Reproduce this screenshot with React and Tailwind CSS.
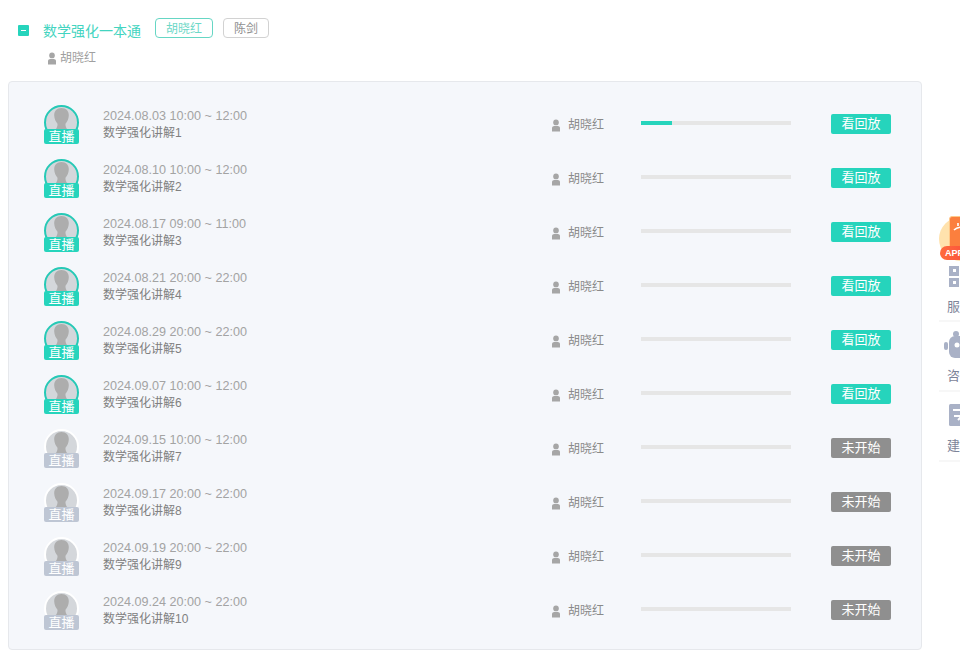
const FONT = "font-['Liberation_Sans','Noto_Sans_CJK_SC',sans-serif]";

const rows = [
  ["2024.08.03 10:00 ~ 12:00", "数学强化讲解1", 1],
  ["2024.08.10 10:00 ~ 12:00", "数学强化讲解2", 1],
  ["2024.08.17 09:00 ~ 11:00", "数学强化讲解3", 1],
  ["2024.08.21 20:00 ~ 22:00", "数学强化讲解4", 1],
  ["2024.08.29 20:00 ~ 22:00", "数学强化讲解5", 1],
  ["2024.09.07 10:00 ~ 12:00", "数学强化讲解6", 1],
  ["2024.09.15 10:00 ~ 12:00", "数学强化讲解7", 0],
  ["2024.09.17 20:00 ~ 22:00", "数学强化讲解8", 0],
  ["2024.09.19 20:00 ~ 22:00", "数学强化讲解9", 0],
  ["2024.09.24 20:00 ~ 22:00", "数学强化讲解10", 0],
];

function UserIcon({ className }) {
  return (
    <svg viewBox="0 0 8 12" className={className} fill="#a6a6a6">
      <ellipse cx="4" cy="2.9" rx="2.8" ry="2.9" />
      <path d="M0 12V8.6C0 7.3 1.100 6.400 2.300 6.400h3.400C6.900 6.400 8 7.300 8 8.600V12z" />
    </svg>
  );
}

function Avatar({ active }) {
  return (
    <div className="relative w-[35px] h-[39px] shrink-0">
      <div className={`w-[35px] h-[35px] rounded-full overflow-hidden ${active ? "border-2 border-[#26c9b6]" : "border-2 border-white"} bg-[#d4d7db]`}>
        <svg viewBox="0 0 35 35" className="block -mt-[2px] -ml-[2px] w-[35px] h-[35px] max-w-none">
          <path d="M6 35c0-6 3-9 8-10h7c5 1 8 4 8 10z" fill="#f4f4f4" />
          <path d="M17.500 3c4.600 0 7.500 3 7.300 7.500-.2 3.500-1.500 6.300-3.300 8.200-.2 2 .5 4 2 6l-6 8-6-8c1.500-2 2.200-4 2-6-1.800-1.900-3.100-4.700-3.300-8.200C10 6 12.900 3 17.500 3z" fill="#adadad" />
        </svg>
      </div>
      <div className={`absolute left-0 bottom-0 w-[35px] h-[15px] rounded-[2px] text-center text-white text-[13px] leading-[16px] ${active ? "bg-[#26d4bc]" : "bg-[#bec6d4]"}`}>
        直播
      </div>
    </div>
  );
}

function Row({ date, title, active, first }) {
  return (
    <div className="flex items-center h-[54px]">
      <div className="ml-[35px]">
        <Avatar active={active} />
      </div>
      <div className="ml-[24px] w-[449px] mt-[1px]">
        <div className="text-[12.6px] leading-[18px] text-[#a3a3a3]">{date}</div>
        <div className="-mt-[1px] text-[12px] leading-[18px] text-[#808080]">{title}</div>
      </div>
      <div className="flex items-center w-[89px] mt-[2px]">
        <UserIcon className="w-[8px] h-[13px]" />
        <span className="ml-[8px] text-[12px] text-[#8a8a8a]">胡晓红</span>
      </div>
      <div className="w-[150px] h-[4px] bg-[#e6e6e6] -mt-[3px]">
        {first && <div className="w-[31px] h-full bg-[#26d4bc]" />}
      </div>
      <button className={`ml-[40px] w-[60px] h-[20px] rounded-[2px] text-white text-[13px] leading-[20px] ${active ? "bg-[#26d4bc]" : "bg-[#8f8f8f]"}`}>
        {active ? "看回放" : "未开始"}
      </button>
    </div>
  );
}

function SideItem({ icon, label, pad }) {
  return (
    <div className={`border-b-2 border-[#f7f7f7] ${pad}`}>
      {icon}
      <div className="ml-[8px] text-[13px] leading-[18px] text-[#7d8499] whitespace-nowrap w-[60px]">{label}</div>
    </div>
  );
}

export default function App() {
  return (
    <div className={`flex w-[960px] h-[660px] overflow-hidden bg-white ${FONT}`}>
      <div className="w-[922px] shrink-0 pl-[8px] pt-[18px]">
        <div className="flex items-start h-[20px] pl-[10px]">
          <div className="mt-[7px] w-[11px] h-[11px] bg-[#26d4bc] rounded-[1px] flex items-center justify-center">
            <div className="w-[5px] h-[1px] bg-white" />
          </div>
          <div className="ml-[14px] mt-[3px] text-[14px] leading-[20px] text-[#43d4c0]">数学强化一本通</div>
          <div className="ml-[14px] w-[58px] h-[20px] rounded-[4px] border border-[#66d6c4] text-center text-[12px] leading-[20px] text-[#6fd8c8]">胡晓红</div>
          <div className="ml-[10px] w-[46px] h-[20px] rounded-[4px] border border-[#d2d2d2] text-center text-[12px] leading-[20px] text-[#909090]">陈剑</div>
        </div>
        <div className="flex items-center mt-[12px] ml-[40px] h-[16px]">
          <UserIcon className="w-[8px] h-[13px]" />
          <span className="ml-[4px] text-[12px] text-[#a0a0a0]">胡晓红</span>
        </div>
        <div className="mt-[15px] w-[914px] h-[569px] bg-[#f5f7fb] border border-[#e6e8ec] rounded-[4px] pt-[15px]">
          {rows.map((r, i) => (
            <Row key={i} date={r[0]} title={r[1]} active={r[2] === 1} first={i === 0} />
          ))}
        </div>
      </div>

      <div className="ml-[17px] w-[60px] shrink-0 pt-[216px]">
        <div className="relative h-[46px]">
          <div className="absolute left-0 top-[1px] w-[44px] h-[44px] rounded-full bg-[#ffe2ad]" />
          <div className="absolute left-[10px] top-0 w-[26px] h-[36px] rounded-[3px] bg-[#fb7f3e] border border-[#ffc98a]">
            <svg viewBox="0 0 12 12" className="w-[12px] h-[12px] mt-[5px] ml-[2px]" fill="none" stroke="#fff" strokeWidth="1.6">
              <path d="M6 1v3M2 8c2-2 5-3 9-3" />
            </svg>
          </div>
          <div className="absolute left-[1px] top-[30px] w-[40px] h-[14px] rounded-[7px] bg-gradient-to-r from-[#ff6a3d] to-[#f8453a] pl-[5px] text-[9px] font-bold leading-[15px] text-white">APP</div>
        </div>
        <SideItem
          pad="pt-[4px] h-[60px]"
          label="服务"
          icon={
            <div className="ml-[10px] mb-[11px] w-[22px] h-[21px] grid grid-cols-2 gap-[2px]">
              {[0, 1, 2, 3].map((k) => (
                <div key={k} className="bg-[#a9b1c6] flex items-center justify-center">
                  <div className="w-[3px] h-[3px] bg-white" />
                </div>
              ))}
            </div>
          }
        />
        <SideItem
          label="咨询"
          pad="pt-[9px] h-[70px]"
          icon={
            <svg viewBox="0 0 30 28" className="ml-[5px] mb-[8px] w-[30px] h-[28px]" fill="#a9b1c6">
              <rect x="0" y="11" width="4" height="8" rx="2" />
              <circle cx="12" cy="3" r="3" />
              <rect x="5" y="5" width="25" height="22" rx="6" />
              <circle cx="13" cy="14" r="2.500" fill="#fff" />
            </svg>
          }
        />
        <SideItem
          label="建议"
          pad="pt-[12px] h-[70px]"
          icon={
            <svg viewBox="0 0 24 22" className="ml-[10px] mb-[11px] w-[24px] h-[22px]" fill="#a9b1c6">
              <rect width="24" height="22" rx="1.500" />
              <path d="M4 6h14M5 12h8l-4 4" fill="none" stroke="#fff" strokeWidth="2" />
            </svg>
          }
        />
      </div>
    </div>
  );
}
